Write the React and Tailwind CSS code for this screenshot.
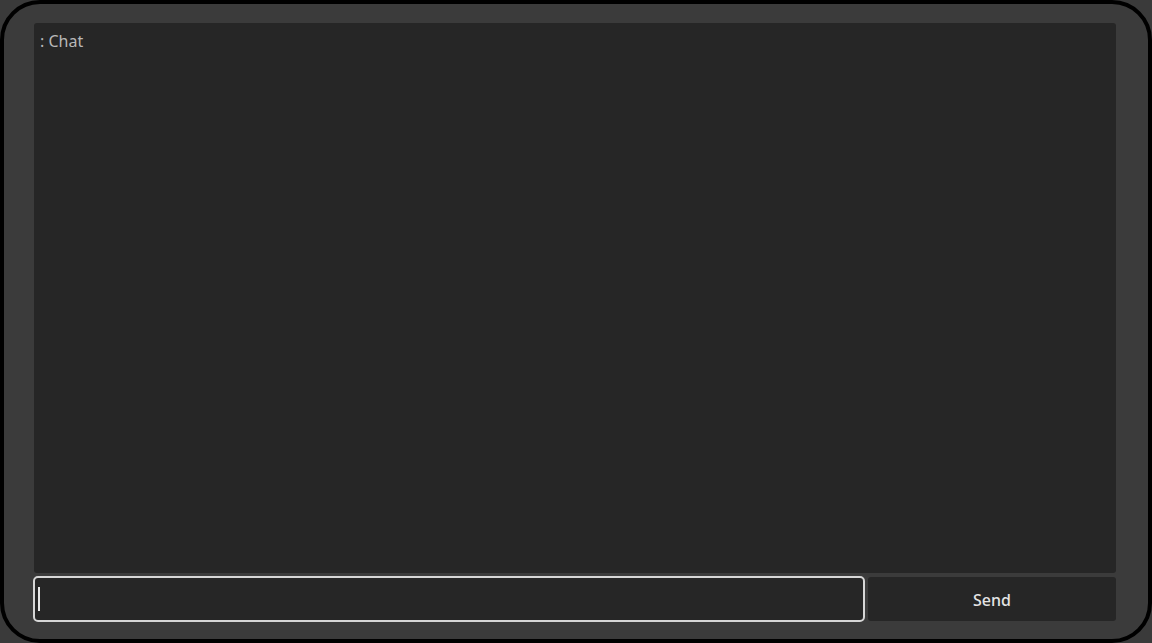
export default function App() {
  return (
    <div className="w-[1152px] h-[643px] bg-[#3a3a3a] overflow-hidden" style={{ fontFamily: '"Noto Sans", "Open Sans", sans-serif' }}>
      <div className="w-full h-full border-[4px] border-black rounded-[40px] bg-[#3b3b3b] flex flex-col pt-[19px] pl-[29px] pr-[32px] pb-[16px]">
        {/* Chat log */}
        <div className="ml-[1px] h-[550px] shrink-0 bg-[#262626] rounded-[3px] px-[6px] pt-[7px] text-[16px] leading-[22px] text-[#b8b8b8]">
          : Chat
        </div>

        {/* Input row */}
        <div className="flex items-center gap-[3px] mt-[3px] h-[46px] shrink-0">
          <div className="w-[832px] h-[46px] border-2 border-[#d6d6d6] rounded-[5px] bg-[#262626] flex items-center pl-[3px]">
            <div className="w-[2px] h-[24px] bg-[#e8e8e8]" />
          </div>
          <button className="flex-1 h-[44px] bg-[#262626] rounded-[3px] text-[16px] font-medium text-[#e4e4e4] pt-[1px]">
            Send
          </button>
        </div>
      </div>
    </div>
  );
}
